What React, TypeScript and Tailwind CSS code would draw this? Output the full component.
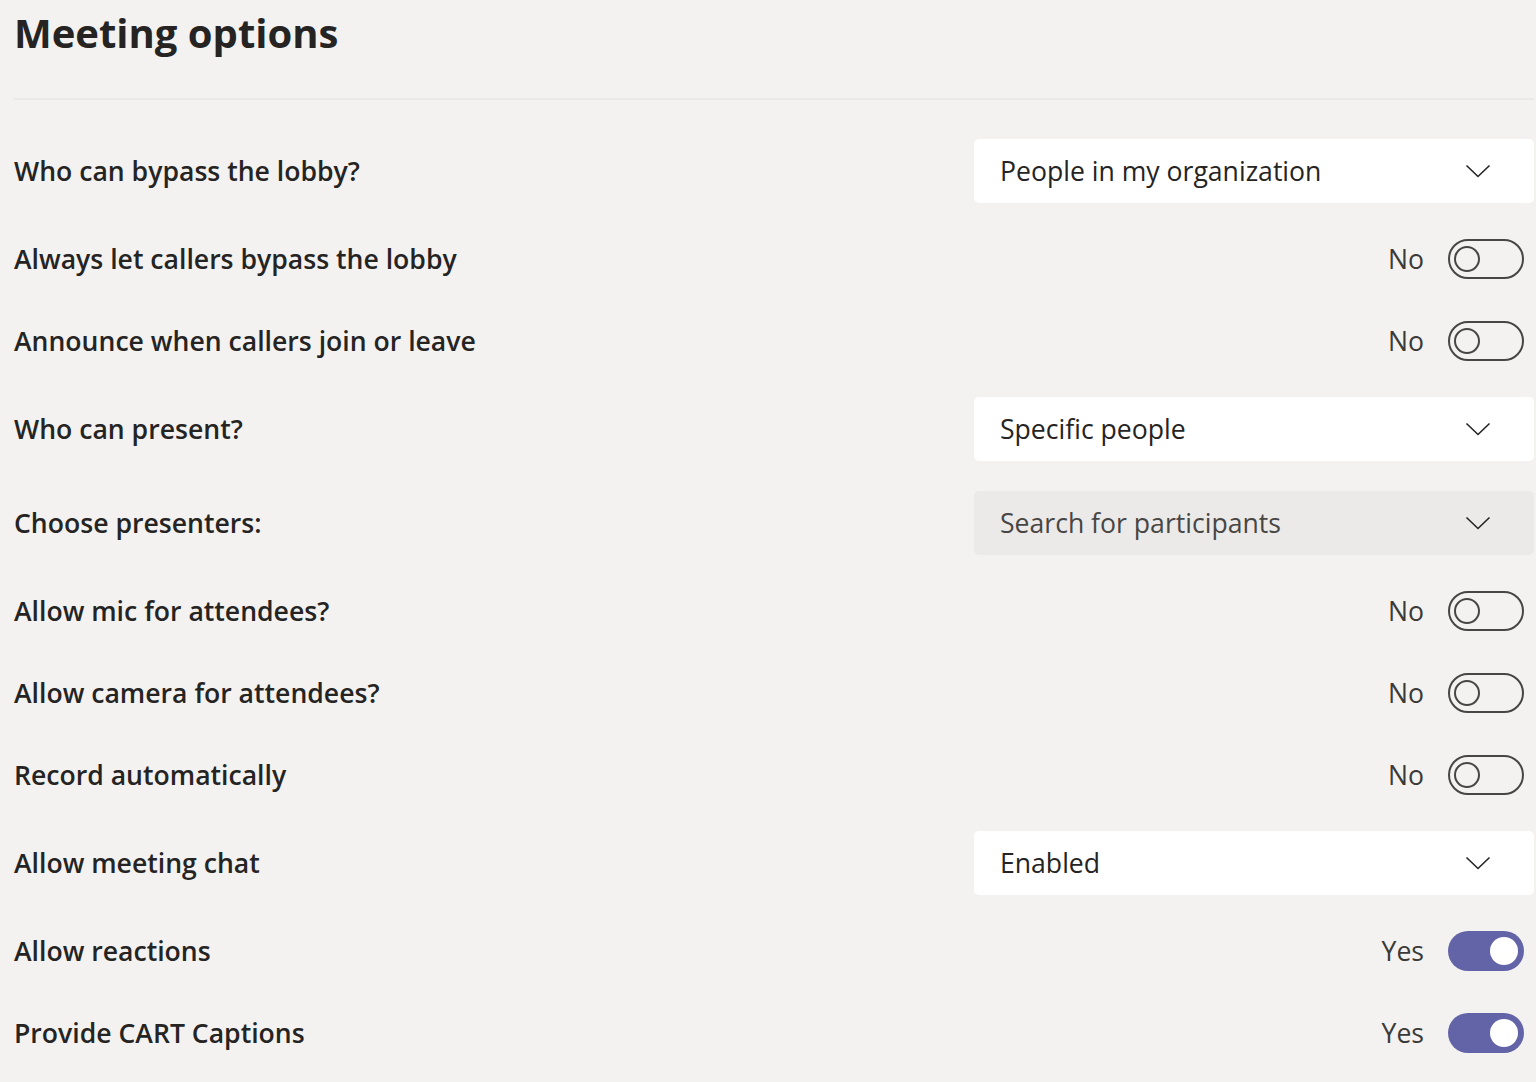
import { ReactNode } from "react";

type Row =
  | { kind: "select"; label: string; value: string; placeholder?: boolean }
  | { kind: "toggle"; label: string; on: boolean };

const ROWS: Row[] = [
  { kind: "select", label: "Who can bypass the lobby?", value: "People in my organization" },
  { kind: "toggle", label: "Always let callers bypass the lobby", on: false },
  { kind: "toggle", label: "Announce when callers join or leave", on: false },
  { kind: "select", label: "Who can present?", value: "Specific people" },
  { kind: "select", label: "Choose presenters:", value: "Search for participants", placeholder: true },
  { kind: "toggle", label: "Allow mic for attendees?", on: false },
  { kind: "toggle", label: "Allow camera for attendees?", on: false },
  { kind: "toggle", label: "Record automatically", on: false },
  { kind: "select", label: "Allow meeting chat", value: "Enabled" },
  { kind: "toggle", label: "Allow reactions", on: true },
  { kind: "toggle", label: "Provide CART Captions", on: true },
];

function Chevron() {
  return (
    <svg width="26" height="14" viewBox="0 0 26 14" fill="none" className="flex-none">
      <path d="M1.5 1.5 L13 12.5 L24.5 1.5" stroke="#252423" strokeWidth="1.6" />
    </svg>
  );
}

function Select({ value, placeholder }: { value: string; placeholder?: boolean }) {
  return (
    <div
      className={`w-[560px] h-[64px] rounded-[5px] flex items-center justify-between pl-[26px] pr-[43px] ${
        placeholder ? "bg-[#ebeae9] text-[#484644]" : "bg-white text-[#252423]"
      }`}
    >
      <span className="text-[26.6px] pt-[1px]">{value}</span>
      <Chevron />
    </div>
  );
}

function Toggle({ on }: { on: boolean }) {
  return (
    <div className="flex items-center gap-[24px] mr-[10px]">
      <span className="text-[26.6px] text-[#3b3a39] pt-[1px]">{on ? "Yes" : "No"}</span>
      {on ? (
        <div className="w-[76px] h-[40px] rounded-full bg-[#6264a7] flex items-center justify-end pr-[6px]">
          <div className="w-[28px] h-[28px] rounded-full bg-white" />
        </div>
      ) : (
        <div className="w-[76px] h-[40px] rounded-full border-2 border-[#484644] flex items-center pl-[4px]">
          <div className="w-[26px] h-[26px] rounded-full border-2 border-[#484644]" />
        </div>
      )}
    </div>
  );
}

function OptionRow({ label, children, tall }: { label: string; children: ReactNode; tall: boolean }) {
  return (
    <div className={`flex items-center justify-between ${tall ? "h-[94px]" : "h-[82px]"}`}>
      <span className="text-[26.6px] font-semibold text-[#252423] pt-[2px]">{label}</span>
      {children}
    </div>
  );
}

export default function App() {
  return (
    <div
      className="min-h-screen bg-[#f3f2f1] pl-[13px] pr-[2px]"
      style={{ fontFamily: '"Open Sans", "Noto Sans", sans-serif' }}
    >
      <div className="h-[100px] pl-[1px] border-b-2 border-[#ebe9e7]">
        <h1 className="text-[40px] font-bold text-[#252423] leading-none pt-[13px]">Meeting options</h1>
      </div>
      <div className="pt-[24px] pl-[1px]">
        {ROWS.map((r) =>
          r.kind === "select" ? (
            <OptionRow key={r.label} label={r.label} tall>
              <Select value={r.value} placeholder={r.placeholder} />
            </OptionRow>
          ) : (
            <OptionRow key={r.label} label={r.label} tall={false}>
              <Toggle on={r.on} />
            </OptionRow>
          )
        )}
      </div>
    </div>
  );
}
